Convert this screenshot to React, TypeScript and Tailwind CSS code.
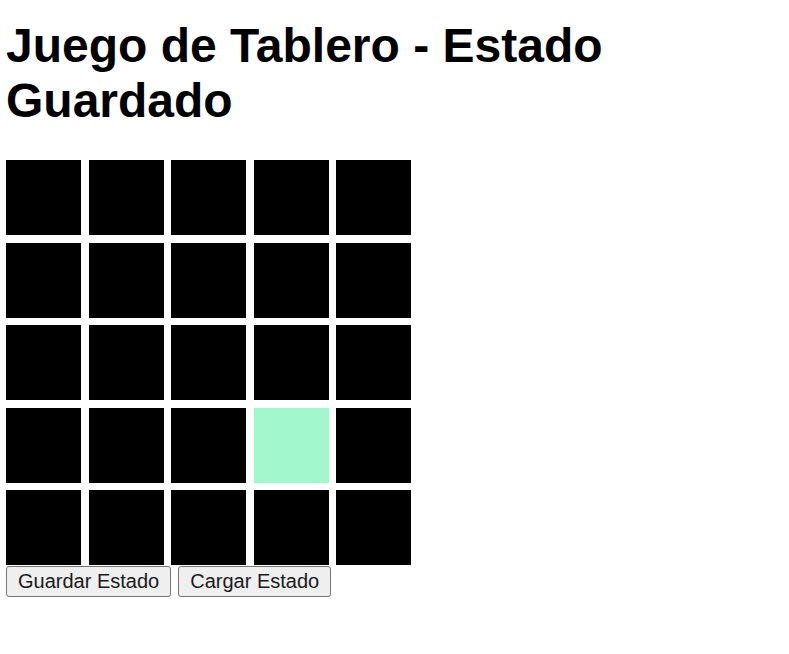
const SIZE = 5
// highlighted cell (row, col)
const ACTIVE = { row: 3, col: 3 }

export default function App() {
  const cells = Array.from({ length: SIZE * SIZE }, (_, i) => ({
    row: Math.floor(i / SIZE),
    col: i % SIZE,
  }))

  return (
    <div className="min-h-screen bg-white px-[6px] pt-[18px] font-['Liberation_Sans',Arial,sans-serif] text-black">
      <h1 className="text-[48px] font-bold leading-[55px]">
        Juego de Tablero - Estado Guardado
      </h1>

      <div className="mt-[32px] grid w-[405px] grid-cols-[repeat(5,75px)] gap-[7.5px]">
        {cells.map((c) => (
          <div
            key={`${c.row}-${c.col}`}
            className={
              c.row === ACTIVE.row && c.col === ACTIVE.col
                ? "h-[75px] w-[75px] bg-[#a3f7cc]"
                : "h-[75px] w-[75px] bg-black"
            }
          />
        ))}
      </div>

      <div className="mt-[1px] flex gap-[7px]">
        <button className="h-[31px] rounded-[3px] border border-[#767676] bg-[#efefef] px-[11px] text-[20px] leading-[23px] text-[#1a1a1a]">
          Guardar Estado
        </button>
        <button className="h-[31px] rounded-[3px] border border-[#767676] bg-[#efefef] px-[11px] text-[20px] leading-[23px] text-[#1a1a1a]">
          Cargar Estado
        </button>
      </div>
    </div>
  )
}
